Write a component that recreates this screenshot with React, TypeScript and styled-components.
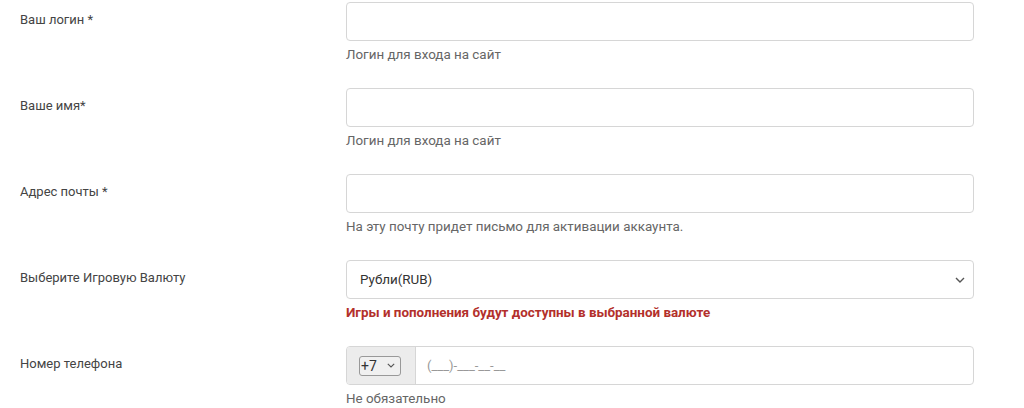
import styled, { createGlobalStyle } from "styled-components";

const GlobalStyle = createGlobalStyle`
  body {
    margin: 0;
    background: #fff;
    font-family: Roboto, "Liberation Sans", sans-serif;
    color: #333;
  }
`;

const Form = styled.form`
  padding-top: 2px;
  width: 1024px;
`;

const Row = styled.div`
  display: grid;
  grid-template-columns: 346px 628px;
  height: 86px;

  &:last-child {
    height: auto;
  }
`;

const Label = styled.label`
  padding: 10px 0 0 20px;
  font-size: 13px;
  line-height: 16px;
  color: #444;
`;

const Control = styled.div`
  display: flex;
  flex-direction: column;
`;

const Input = styled.input`
  box-sizing: border-box;
  height: 39px;
  width: 100%;
  border: 1px solid #d6d6d6;
  border-radius: 4px;
  padding: 0 12px;
  font: inherit;
  font-size: 13px;
`;

const SelectBox = styled.div`
  box-sizing: border-box;
  height: 39px;
  border: 1px solid #d6d6d6;
  border-radius: 4px;
  padding: 0 8px 0 13px;
  display: flex;
  align-items: center;
  justify-content: space-between;
  font-size: 13.4px;
  color: #333;
`;

const Help = styled.div<{ $error?: boolean }>`
  margin-top: 6px;
  font-size: 13.4px;
  line-height: 16px;
  color: ${(p) => (p.$error ? "#b3302b" : "#666")};
  font-weight: ${(p) => (p.$error ? 700 : 400)};
`;

const PhoneGroup = styled.div`
  box-sizing: border-box;
  height: 39px;
  border: 1px solid #d6d6d6;
  border-radius: 4px;
  display: flex;
  overflow: hidden;
`;

const Addon = styled.div`
  width: 69px;
  background: #ececec;
  border-right: 1px solid #d6d6d6;
  display: flex;
  align-items: center;
  padding-left: 12px;
  box-sizing: border-box;
`;

const CodeSelect = styled.div`
  box-sizing: border-box;
  width: 42px;
  height: 20px;
  border: 1px solid #999;
  border-radius: 3px;
  display: flex;
  align-items: center;
  justify-content: space-between;
  padding: 0 5px 0 1px;
  font-size: 14px;
  color: #333;
  background: #f0f0f0;
`;

const Mask = styled.div`
  flex: 1;
  display: flex;
  align-items: center;
  padding-left: 11px;
  font-size: 13px;
  color: #999;
`;

const Chevron = ({ size = 10 }: { size?: number }) => (
  <svg width={size} height={size * 0.6} viewBox="0 0 10 6">
    <path d="M1 1l4 4 4-4" fill="none" stroke="#555" strokeWidth="1.4" />
  </svg>
);

export default function App() {
  return (
    <>
      <GlobalStyle />
      <Form>
        <Row>
          <Label>Ваш логин *</Label>
          <Control>
            <Input />
            <Help>Логин для входа на сайт</Help>
          </Control>
        </Row>
        <Row>
          <Label>Ваше имя*</Label>
          <Control>
            <Input />
            <Help>Логин для входа на сайт</Help>
          </Control>
        </Row>
        <Row>
          <Label>Адрес почты *</Label>
          <Control>
            <Input />
            <Help>На эту почту придет письмо для активации аккаунта.</Help>
          </Control>
        </Row>
        <Row>
          <Label>Выберите Игровую Валюту</Label>
          <Control>
            <SelectBox>
              Рубли(RUB)
              <Chevron />
            </SelectBox>
            <Help $error>Игры и пополнения будут доступны в выбранной валюте</Help>
          </Control>
        </Row>
        <Row>
          <Label>Номер телефона</Label>
          <Control>
            <PhoneGroup>
              <Addon>
                <CodeSelect>
                  +7
                  <Chevron size={8} />
                </CodeSelect>
              </Addon>
              <Mask>(___)-___-__-__</Mask>
            </PhoneGroup>
            <Help>Не обязательно</Help>
          </Control>
        </Row>
      </Form>
    </>
  );
}
